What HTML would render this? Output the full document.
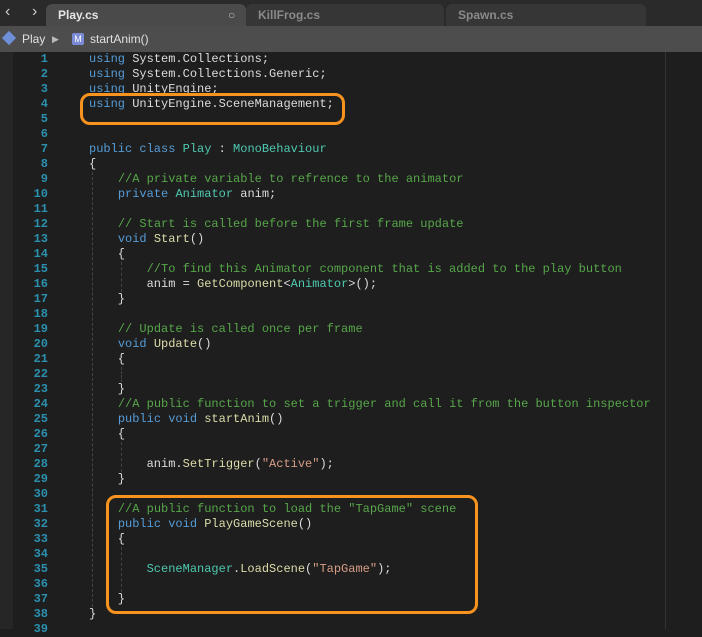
<!DOCTYPE html>
<html><head><style>
body{margin:0;width:702px;height:629px;overflow:hidden;background:#1e1e1e;font-family:"Liberation Sans",sans-serif;position:relative}
.tabbar{position:absolute;left:0;top:0;width:702px;height:26px;background:#2a2a2a}
.tab{position:absolute;top:4px;height:22px;border-radius:6px 6px 0 0;font-size:12px;font-weight:bold;line-height:23px;padding-left:12px;box-sizing:border-box}
.crumb{position:absolute;left:0;top:26px;width:702px;height:26px;background:#4d4d4d;color:#e0e0e0;font-size:12px;line-height:27px}
.gut{position:absolute;left:0;top:52px;width:13px;height:577px;background:#262626}
.vline{position:absolute;left:665px;top:52px;width:1px;height:577px;background:#333}
.g{position:absolute;width:0;border-left:1px dashed #444}
.code{position:absolute;left:0;top:52px;font-family:"Liberation Mono",monospace;font-size:12px;line-height:15px;color:#dcdcdc;white-space:pre}
.ln{display:inline-block;width:48px;text-align:right;color:#2b91af;font-weight:bold;margin-right:41px}
.k{color:#569cd6}.t{color:#4ec9b0}.f{color:#dcdcaa}.c{color:#57a64a}.s{color:#d69d85}
.box{position:absolute;border:3px solid #f7931e;border-radius:10px}
</style></head><body>
<div class="tabbar">
<span style="position:absolute;left:5px;top:3px;color:#ccc;font-size:16px">&#8249;</span>
<span style="position:absolute;left:32px;top:3px;color:#ccc;font-size:16px">&#8250;</span>
<div class="tab" style="left:46px;width:200px;background:#4a4a4a;color:#e6e6e6">Play.cs<span style="position:absolute;left:182px;top:0;font-weight:normal;color:#bbb">&#9675;</span></div>
<div class="tab" style="left:246px;width:198px;background:#363636;color:#8a8a8a">KillFrog.cs</div>
<div class="tab" style="left:446px;width:200px;background:#363636;color:#8a8a8a">Spawn.cs</div>
</div>
<div class="crumb">
<span style="position:absolute;left:4px;top:7px;width:10px;height:10px;background:#6f8fd8;transform:rotate(45deg)"></span>
<span style="position:absolute;left:22px">Play</span>
<span style="position:absolute;left:52px;font-size:9px;color:#bbb">&#9654;</span>
<span style="position:absolute;left:72px;top:7px;width:12px;height:12px;background:#7c8bd8;border-radius:2px;font-size:9px;line-height:12px;text-align:center;color:#fff">M</span>
<span style="position:absolute;left:90px">startAnim()</span>
</div>
<div class="gut"></div><div class="vline"></div>
<div class="g" style="left:92px;top:172px;height:435px"></div>
<div class="g" style="left:121px;top:262px;height:30px"></div>
<div class="g" style="left:121px;top:367px;height:15px"></div>
<div class="g" style="left:121px;top:442px;height:30px"></div>
<div class="g" style="left:121px;top:547px;height:45px"></div>
<div class="code"><span class="ln">1</span><span class="k">using</span> System.Collections;
<span class="ln">2</span><span class="k">using</span> System.Collections.Generic;
<span class="ln">3</span><span class="k">using</span> UnityEngine;
<span class="ln">4</span><span class="k">using</span> UnityEngine.SceneManagement;
<span class="ln">5</span>
<span class="ln">6</span>
<span class="ln">7</span><span class="k">public class</span> <span class="t">Play</span> : <span class="t">MonoBehaviour</span>
<span class="ln">8</span>{
<span class="ln">9</span>    <span class="c">//A private variable to refrence to the animator</span>
<span class="ln">10</span>    <span class="k">private</span> <span class="t">Animator</span> anim;
<span class="ln">11</span>
<span class="ln">12</span>    <span class="c">// Start is called before the first frame update</span>
<span class="ln">13</span>    <span class="k">void</span> <span class="f">Start</span>()
<span class="ln">14</span>    {
<span class="ln">15</span>        <span class="c">//To find this Animator component that is added to the play button</span>
<span class="ln">16</span>        anim = <span class="f">GetComponent</span>&lt;<span class="t">Animator</span>&gt;();
<span class="ln">17</span>    }
<span class="ln">18</span>
<span class="ln">19</span>    <span class="c">// Update is called once per frame</span>
<span class="ln">20</span>    <span class="k">void</span> <span class="f">Update</span>()
<span class="ln">21</span>    {
<span class="ln">22</span>
<span class="ln">23</span>    }
<span class="ln">24</span>    <span class="c">//A public function to set a trigger and call it from the button inspector</span>
<span class="ln">25</span>    <span class="k">public void</span> <span class="f">startAnim</span>()
<span class="ln">26</span>    {
<span class="ln">27</span>
<span class="ln">28</span>        anim.<span class="f">SetTrigger</span>(<span class="s">"Active"</span>);
<span class="ln">29</span>    }
<span class="ln">30</span>
<span class="ln">31</span>    <span class="c">//A public function to load the "TapGame" scene</span>
<span class="ln">32</span>    <span class="k">public void</span> <span class="f">PlayGameScene</span>()
<span class="ln">33</span>    {
<span class="ln">34</span>
<span class="ln">35</span>        <span class="t">SceneManager</span>.<span class="f">LoadScene</span>(<span class="s">"TapGame"</span>);
<span class="ln">36</span>
<span class="ln">37</span>    }
<span class="ln">38</span>}
<span class="ln">39</span></div>
<div class="box" style="left:80px;top:93px;width:259px;height:26px"></div>
<div class="box" style="left:106px;top:495px;width:366px;height:113px"></div>
</body></html>
